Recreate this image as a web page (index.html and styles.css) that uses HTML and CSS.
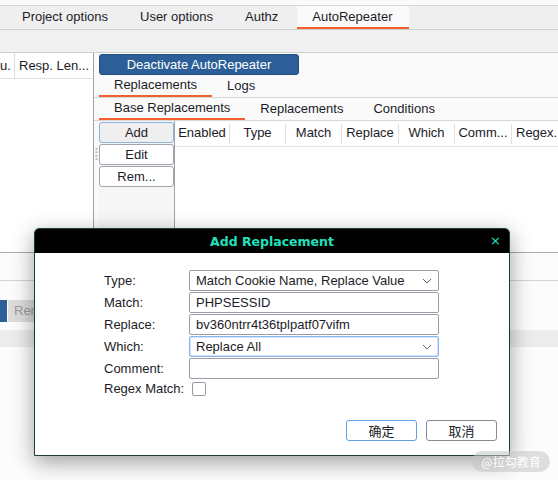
FILE: index.html
```html
<!DOCTYPE html>
<html>

<head>
    <title>AutoRepeater</title>
    <meta charset="utf-8">
    <link rel="stylesheet" href="styles.css">
</head>

<body>
    <div class="topline"></div>

    <nav class="tabs">
        <span class="tab">Project options</span>
        <span class="tab">User options</span>
        <span class="tab">Authz</span>
        <span class="tab valgt">AutoRepeater</span>
    </nav>
    <div class="subbar"></div>

    <div class="main">
        <section class="left">
            <div class="left_head">
                <span class="lh cut">u.</span>
                <span class="lh">Resp. Len...</span>
            </div>
        </section>

        <section class="right">
            <button class="deact">Deactivate AutoRepeater</button>

            <div class="subtabs">
                <span class="stab valgt">Replacements</span>
                <span class="stab">Logs</span>
            </div>
            <div class="subtabs">
                <span class="stab valgt">Base Replacements</span>
                <span class="stab">Replacements</span>
                <span class="stab">Conditions</span>
            </div>

            <div class="rep">
                <div class="grip"></div>
                <div class="knapper">
                    <button class="knap add">Add</button>
                    <button class="knap">Edit</button>
                    <button class="knap">Rem...</button>
                </div>
                <div class="tabel">
                    <div class="thead">
                        <span class="th">Enabled</span>
                        <span class="th">Type</span>
                        <span class="th">Match</span>
                        <span class="th">Replace</span>
                        <span class="th">Which</span>
                        <span class="th">Comm...</span>
                        <span class="th last">Regex...</span>
                    </div>
                </div>
            </div>
        </section>
    </div>

    <div class="lower">
        <div class="lower_a"></div>
        <div class="lower_b">
            <span class="bluebit"></span>
            <span class="graybtn">Remove</span>
        </div>
        <div class="band"></div>
    </div>

    <!-- dialog over the page -->
    <div class="dialog">
        <div class="titel">
            <span>Add Replacement</span>
            <span class="luk">&times;</span>
        </div>
        <div class="indhold">
            <div class="form">
                <label>Type:</label>
                <div class="felt select">Match Cookie Name, Replace Value
                    <svg class="chev" width="10" height="6" viewBox="0 0 10 6"><polyline points="1,1 5,5 9,1" fill="none" stroke="#666" stroke-width="1"/></svg>
                </div>
                <label>Match:</label>
                <div class="felt">PHPSESSID</div>
                <label>Replace:</label>
                <div class="felt">bv360ntrr4t36tplpatf07vifm</div>
                <label>Which:</label>
                <div class="felt select fokus">Replace All
                    <svg class="chev" width="10" height="6" viewBox="0 0 10 6"><polyline points="1,1 5,5 9,1" fill="none" stroke="#666" stroke-width="1"/></svg>
                </div>
                <label>Comment:</label>
                <div class="felt"></div>
                <label class="regex">Regex Match:</label>
                <div class="check_row"><span class="check"></span></div>
            </div>
            <div class="handling">
                <button class="dknap ok">确定</button>
                <button class="dknap">取消</button>
            </div>
        </div>
    </div>

    <div class="watermark">@拉勾教育</div>
</body>

</html>
```

FILE: styles.css
```css
body {
    margin: 0;
    background-color: #fcfcfc;
    color: #1c1c28;
    font-family: "Liberation Sans", Arial, sans-serif;
    font-size: 13px;
    overflow: hidden;
}

button {
    font-family: "Liberation Sans", Arial, sans-serif;
    font-size: 13px;
    color: #1c1c28;
    padding: 0;
}

.topline {
    height: 5px;
    background-color: #fafafa;
}

.tabs {
    display: flex;
    height: 23px;
    padding-left: 6px;
    background-color: #efefef;
    border-top: 1px solid #d8d8d8;
    border-bottom: 1px solid #d0d0d0;
}

.tab {
    padding: 0 16px;
    line-height: 22px;
}

.tab.valgt {
    background-color: #fafafa;
    border-bottom: 2px solid #f4602c;
    line-height: 21px;
    margin-left: 3px;
    padding: 0 17px 0 15px;
}

.subbar {
    height: 22px;
    background-color: #f0f0f0;
    border-bottom: 1px solid #d0d0d0;
}

.main {
    display: flex;
    height: 199px;
    border-bottom: 1px solid #a8a8b2;
}

.left {
    width: 93px;
    flex-shrink: 0;
    background-color: #ffffff;
    border-right: 1px solid #a0a0aa;
}

.left_head {
    display: flex;
    height: 25px;
    border-bottom: 1px solid #e0e0e0;
}

.lh {
    line-height: 25px;
    white-space: nowrap;
    padding-left: 4px;
}

.lh.cut {
    width: 15px;
    flex-shrink: 0;
    text-align: right;
    border-right: 1px solid #dddddd;
    box-sizing: border-box;
    padding: 0 4px 0 0;
    overflow: hidden;
}

.right {
    flex: 1;
    min-width: 0;
    padding-left: 5px;
    background-color: #fafafa;
    display: flex;
    flex-direction: column;
}

.deact {
    width: 200px;
    height: 21px;
    margin-top: 1px;
    background-color: #2c5f98;
    border: 1px solid #22507f;
    border-radius: 3px;
    color: #ffffff;
}

.subtabs {
    display: flex;
    height: 22px;
    border-bottom: 1px solid #d6d6d6;
    margin-left: -5px;
    padding-left: 5px;
}

.stab {
    padding: 0 15px;
    line-height: 22px;
}

.stab.valgt {
    border-bottom: 2px solid #f4602c;
    line-height: 20px;
}

.rep {
    flex: 1;
    display: flex;
    margin-left: -5px;
}

.grip {
    width: 3px;
    height: 14px;
    flex-shrink: 0;
    margin: 26px 1px 0 1px;
    background-image: radial-gradient(circle, #b4b4b4 1px, transparent 1.2px);
    background-size: 3px 3.5px;
}

.knapper {
    width: 75px;
    flex-shrink: 0;
    padding-top: 1px;
    display: flex;
    flex-direction: column;
    gap: 1px;
    background-color: #f6f6f6;
    border-right: 1px solid #a0a0aa;
}

.knap {
    width: 75px;
    height: 21px;
    background-color: #ffffff;
    border: 1px solid #a4a4ae;
    border-radius: 3px;
}

.knap.add {
    background-color: #efefef;
    border-color: #8cb2de;
}

.tabel {
    flex: 1;
    min-width: 0;
    background-color: #ffffff;
    overflow: hidden;
}

.thead {
    display: grid;
    grid-template-columns: 55px 56px 56px 57px 56px 57px 60px;
    height: 24px;
    border-bottom: 1px solid #e2e2e2;
    padding-top: 1px;
}

.th {
    text-align: center;
    white-space: nowrap;
    overflow: hidden;
    border-right: 1px solid #dedede;
    margin: 2px 0;
    line-height: 18px;
}

.th.last {
    text-align: left;
    padding-left: 4px;
    border-right: none;
}

.lower_a {
    height: 27px;
    border-bottom: 1px solid #d4d4d4;
}

.lower_b {
    display: flex;
    height: 22px;
    margin-top: 19px;
}

.bluebit {
    width: 7px;
    background-color: #2c5f98;
    margin-right: 1px;
}

.graybtn {
    padding: 0 10px 0 6px;
    line-height: 22px;
    background-color: #dcdcdc;
    color: #9a9a9a;
}

.band {
    height: 17px;
    margin-top: 8px;
    background-color: #ececec;
}

.dialog {
    position: absolute;
    left: 34px;
    top: 228px;
    width: 474px;
    height: 226px;
    background-color: #ffffff;
    border: 1px solid #1b3d3d;
    border-radius: 5px 5px 0 0;
    box-shadow: 0 6px 22px rgba(0, 0, 0, 0.38);
    display: flex;
    flex-direction: column;
}

.titel {
    height: 24px;
    background-color: #000000;
    border-radius: 4px 4px 0 0;
    color: #20e0bd;
    font-family: "DejaVu Sans", sans-serif;
    font-weight: bold;
    font-size: 12.5px;
    display: flex;
    align-items: center;
    justify-content: center;
    position: relative;
}

.titel .luk {
    position: absolute;
    right: 8px;
    top: 4px;
    font-weight: normal;
    font-size: 13px;
}

.indhold {
    flex: 1;
    padding: 17px 12px 0 69px;
}

.form {
    display: grid;
    grid-template-columns: 85px 250px;
    row-gap: 1px;
}

.form label {
    line-height: 21px;
}

.felt {
    height: 21px;
    box-sizing: border-box;
    border: 1px solid #9c9ca8;
    border-radius: 2px;
    padding-left: 6px;
    line-height: 19px;
    white-space: nowrap;
    position: relative;
}

.felt.fokus {
    border-color: #86b6ec;
    box-shadow: inset 0 0 0 1px #d4e5f9;
}

.chev {
    position: absolute;
    right: 6px;
    top: 7px;
}

.form .regex {
    line-height: 17px;
}

.check_row {
    height: 17px;
}

.check {
    display: block;
    width: 12px;
    height: 12px;
    margin: 2px 0 0 3px;
    border: 1px solid #9a9aa4;
    border-radius: 2px;
}

.handling {
    display: flex;
    justify-content: flex-end;
    gap: 9px;
    margin-top: 23px;
}

.dknap {
    width: 71px;
    height: 21px;
    background-color: #ffffff;
    border: 1px solid #8a8a96;
    border-radius: 3px;
    font-family: "Noto Sans CJK SC", sans-serif;
    font-size: 13px;
    line-height: 19px;
}

.dknap.ok {
    border-color: #5ea2e2;
}

.watermark {
    position: absolute;
    left: 472px;
    top: 451px;
    width: 78px;
    height: 21px;
    border-radius: 11px;
    background-color: rgba(196, 196, 196, 0.55);
    color: #ffffff;
    font-family: "Noto Sans CJK SC", sans-serif;
    font-size: 12px;
    line-height: 21px;
    text-align: center;
}
```
